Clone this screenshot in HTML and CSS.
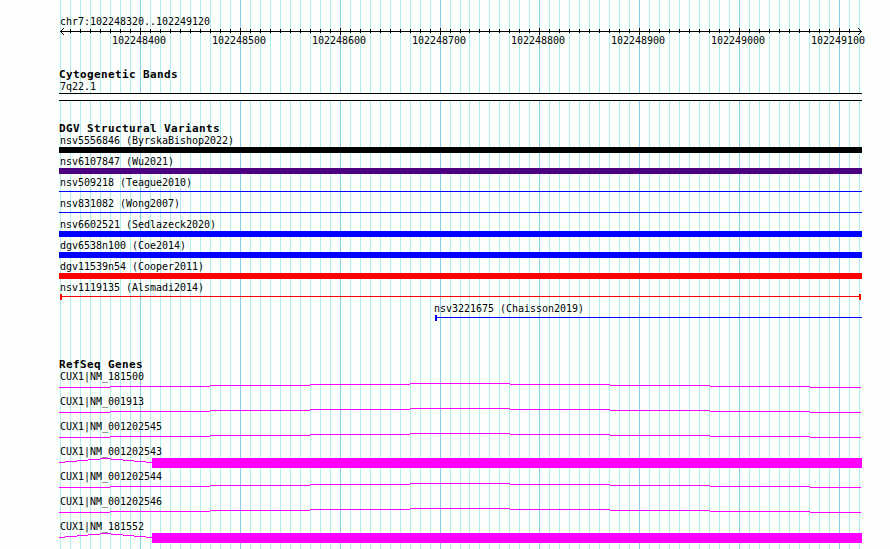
FILE: index.html
```
<!DOCTYPE html>
<html lang="en">
<head>
    <meta charset="UTF-8">
    <title>chr7:102248320..102249120</title>
    <link rel="stylesheet" href="styles.css">
</head>
<body>
    <div class="browser">
        <div class="region">chr7:102248320..102249120</div>
        <svg class="ruler" width="831" height="24" viewBox="59 26 831 24">
            <g fill="none" stroke="#000">
                <path d="M60 31.5H862"/>
                <path d="M64 28L60.5 31.5L64 35M858 28L861.5 31.5L858 35"/>
                <path class="minor" d="M70 31H461M469 31H852"/>
                <path class="major" d="M140 31.5H441M539 31.5H840"/>
            </g>
            <g class="ticks">
                <text x="112" y="44">102248400</text>
                <text x="212" y="44">102248500</text>
                <text x="312" y="44">102248600</text>
                <text x="412" y="44">102248700</text>
                <text x="511" y="44">102248800</text>
                <text x="611" y="44">102248900</text>
                <text x="711" y="44">102249000</text>
                <text x="811" y="44">102249100</text>
            </g>
        </svg>

        <section class="track bands">
            <h2>Cytogenetic Bands</h2>
            <div class="label">7q22.1</div>
            <div class="band"></div>
        </section>

        <section class="track variants">
            <h2>DGV Structural Variants</h2>
            <div class="variant"><div class="label">nsv5556846 (ByrskaBishop2022)</div><div class="bar black"></div></div>
            <div class="variant"><div class="label">nsv6107847 (Wu2021)</div><div class="bar indigo"></div></div>
            <div class="variant"><div class="label">nsv509218 (Teague2010)</div><div class="bar line blue"></div></div>
            <div class="variant"><div class="label">nsv831082 (Wong2007)</div><div class="bar line blue"></div></div>
            <div class="variant"><div class="label">nsv6602521 (Sedlazeck2020)</div><div class="bar blue"></div></div>
            <div class="variant"><div class="label">dgv6538n100 (Coe2014)</div><div class="bar blue"></div></div>
            <div class="variant"><div class="label">dgv11539n54 (Cooper2011)</div><div class="bar red"></div></div>
            <div class="variant"><div class="label">nsv1119135 (Alsmadi2014)</div><div class="bar line red capped both"></div></div>
            <div class="variant partial"><div class="label">nsv3221675 (Chaisson2019)</div><div class="bar line blue capped"></div></div>
        </section>

        <section class="track genes">
            <h2>RefSeq Genes</h2>
            <svg class="defs" width="0" height="0">
                <defs>
                    <path id="intron" d="M0 10.5H51M51 9.5H151M151 8.5H251M251 7.5H351M351 6.5H451M451 7.5H551M551 8.5H651M651 9.5H751M751 10.5H802"/>
                    <g id="exon">
                        <path d="M0 10.5H6M6 9.5H18M18 8.5H29M29 7.5H41M41 6.5H52M52 7.5H64M64 8.5H75M75 9.5H87M87 10.5H93"/>
                        <rect x="93" y="6" width="710" height="10"/>
                    </g>
                </defs>
            </svg>
            <div class="gene"><div class="label">CUX1|NM_181500</div><svg class="model"><use href="#intron"/></svg></div>
            <div class="gene"><div class="label">CUX1|NM_001913</div><svg class="model"><use href="#intron"/></svg></div>
            <div class="gene"><div class="label">CUX1|NM_001202545</div><svg class="model"><use href="#intron"/></svg></div>
            <div class="gene"><div class="label">CUX1|NM_001202543</div><svg class="model"><use href="#exon"/></svg></div>
            <div class="gene"><div class="label">CUX1|NM_001202544</div><svg class="model"><use href="#intron"/></svg></div>
            <div class="gene"><div class="label">CUX1|NM_001202546</div><svg class="model"><use href="#intron"/></svg></div>
            <div class="gene"><div class="label">CUX1|NM_181552</div><svg class="model"><use href="#exon"/></svg></div>
        </section>
    </div>
</body>
</html>
```
FILE: styles.css
```
body {
    margin: 0;
    overflow: hidden;
    background-color: #fdfffc;
    color: #000;
    font-family: "DejaVu Sans Mono", "Liberation Mono", monospace;
    font-size: 10px;
    letter-spacing: -0.02px;
}
/* grid: minor line every 10px, major every 100px */
.browser {
    box-sizing: border-box;
    width: 890px;
    height: 549px;
    padding: 15px 0 0 59px;
    overflow: hidden;
    background-image:
        repeating-linear-gradient(to right, #87ceeb 0 1px, transparent 1px 100px),
        repeating-linear-gradient(to right, #87ceeb 0 1px, transparent 1px 100px),
        repeating-linear-gradient(to right, #afeeee 0 1px, transparent 1px 10px),
        repeating-linear-gradient(to right, #afeeee 0 1px, transparent 1px 10px);
    background-position: 140px 0, 539px 0, 60px 0, 469px 0;
    background-size: 301px 100%, 301px 100%, 401px 100%, 391px 100%;
    background-repeat: no-repeat;
}
.region {
    height: 11px;
    line-height: 14px;
    padding-left: 1px;
}
.ruler {
    display: block;
}
.minor {
    stroke-width: 4px;
    stroke-dasharray: 1 9;
}
.major {
    stroke-width: 7px;
    stroke-dasharray: 1 99;
}
.ticks {
    fill: #000;
}
.track {
    width: 803px;
}
h2 {
    margin: 0;
    height: 12px;
    font-size: 11px;
    line-height: 14px;
    letter-spacing: 0.38px;
}
.label {
    height: 12px;
    line-height: 14px;
    padding-left: 1px;
    white-space: nowrap;
}
.bands {
    padding-top: 18px;
}
.band {
    box-sizing: border-box;
    height: 8px;
    margin-top: 1px;
    border-top: 1px solid #000;
    border-bottom: 1px solid #000;
    background-color: #fdfffc;
}
.variants {
    padding-top: 21px;
}
.variant {
    height: 21px;
}
.bar {
    height: 6px;
    margin-top: 1px;
    background-color: currentColor;
}
.line {
    background: linear-gradient(currentColor, currentColor) 0 2px / 100% 1px no-repeat;
}
.capped {
    box-sizing: border-box;
    border-left: 2px solid;
}
.both {
    margin-left: 1px;
    margin-right: 1px;
    border-right: 2px solid;
}
.partial {
    margin-left: 376px;
}
.partial .label {
    padding: 0;
    margin-left: -1px;
}
.black {
    color: #000;
}
.indigo {
    color: #4b0082;
}
.blue {
    color: #0000ff;
}
.red {
    color: #ff0000;
}
.genes {
    padding-top: 35px;
}
.defs {
    display: none;
}
.gene {
    height: 25px;
}
.model {
    display: block;
    width: 803px;
    height: 16px;
    margin-top: -5px;
    fill: #ff00ff;
}
#intron, #exon path {
    fill: none;
    stroke: #ff00ff;
}
```
